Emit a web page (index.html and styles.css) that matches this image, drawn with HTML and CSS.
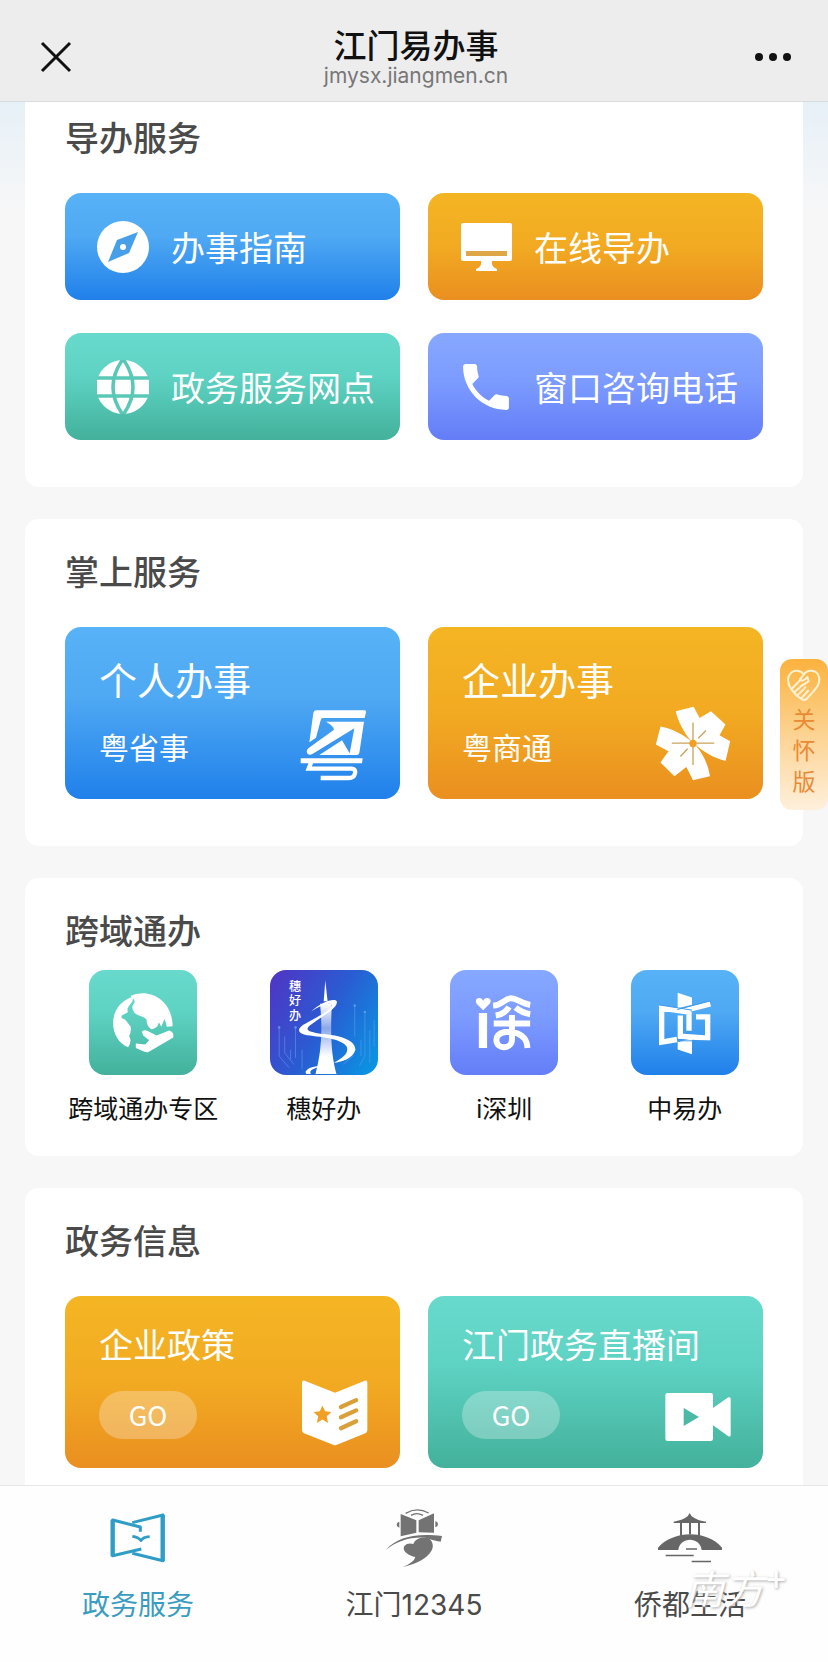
FILE: index.html
```html
<!DOCTYPE html>
<html lang="zh-CN">
<head>
<meta charset="utf-8">
<meta name="viewport" content="width=device-width, initial-scale=1">
<title>江门易办事</title>
<link rel="stylesheet" href="styles.css">
</head>
<body>
<header class="topbar">
  <button class="topbar-btn" type="button" aria-label="关闭">
    <svg width="32" height="32" viewBox="0 0 32 32"><path d="M2 2L30 30M30 2L2 30" stroke="#111" stroke-width="3" fill="none"/></svg>
  </button>
  <div class="topbar-text">
    <h1 class="topbar-title">江门易办事</h1>
    <span class="topbar-url">jmysx.jiangmen.cn</span>
  </div>
  <button class="topbar-btn" type="button" aria-label="更多">
    <svg width="38" height="10" viewBox="0 0 38 10" fill="#111"><circle cx="5" cy="5" r="4"/><circle cx="19" cy="5" r="4"/><circle cx="33" cy="5" r="4"/></svg>
  </button>
</header>

<main class="page">
  <section class="card">
    <h2 class="card-title">导办服务</h2>
    <div class="tiles">
      <a class="tile blue" href="#guide">
        <svg class="tile-icon" viewBox="-26 -26 52 52"><circle r="26" fill="#fff"/><path d="M15-15L6 6L-15 15L-6-7Z" fill="#479fea"/><circle r="3" fill="#fff"/></svg>
        <span>办事指南</span>
      </a>
      <a class="tile orange" href="#online">
        <svg class="tile-icon" viewBox="0 0 52 52"><rect x="1" y="2" width="51" height="38" rx="2" fill="#fff"/><path d="M6 30H47V35H6Z" fill="#dfa645"/><path d="M21 40H32Q31 46 37 48V50H16V48Q22 46 21 40Z" fill="#fff"/></svg>
        <span>在线导办</span>
      </a>
      <a class="tile green" href="#places">
        <svg class="tile-icon" viewBox="-26 -27 52 54"><circle r="27" fill="#fff"/><path d="M-27-9H27M-27 9H27M0-28Q-20 0 0 28Q20 0 0-28" fill="none" stroke="#5ac8b6" stroke-width="3.5"/></svg>
        <span>政务服务网点</span>
      </a>
      <a class="tile violet" href="#phone">
        <svg class="tile-icon" viewBox="1.8 1.8 20.4 20.4"><path fill="#fff" d="M6.62 10.79c1.44 2.83 3.76 5.14 6.59 6.59l2.2-2.2c.27-.27.67-.36 1.02-.24 1.12.37 2.33.57 3.57.57.55 0 1 .45 1 1V20c0 .55-.45 1-1 1-9.39 0-17-7.61-17-17 0-.55.45-1 1-1h3.5c.55 0 1 .45 1 1 0 1.25.2 2.45.57 3.57.11.35.03.74-.25 1.02l-2.2 2.2z"/></svg>
        <span>窗口咨询电话</span>
      </a>
    </div>
  </section>

  <section class="card">
    <h2 class="card-title">掌上服务</h2>
    <div class="tiles">
      <a class="panel blue" href="#personal">
        <span class="panel-name large">个人办事</span>
        <span class="panel-sub">粤省事</span>
        <svg class="panel-icon" width="68" height="72" viewBox="60 190 204 216" fill="#fff">
          <path d="M108 194H254Q259 194 258 200L254 217H128Q124 217 122 224L108 276L88 290L100 202Q101 194 108 194Z"/>
          <path d="M138 228H252L238 322Q237 328 230 328H118L186 284L209 323L223 248L96 326Q82 330 80 318Q80 312 86 307L162 252Q160 240 138 228Z"/>
          <path d="M62 338H248L246 353H62Z"/>
          <path d="M94 348L86 369H214Q228 369 225 383Q222 397 206 397H122" fill="none" stroke="#fff" stroke-width="13"/>
        </svg>
      </a>
      <a class="panel orange" href="#business">
        <span class="panel-name large">企业办事</span>
        <span class="panel-sub">粤商通</span>
        <svg class="panel-icon" width="76" height="75" viewBox="108 190 228 226">
          <path fill="#fff" d="M170 206L224 192L242 226L276 206L320 246L302 278L334 296L320 356C280 345 250 325 228 306C250 330 268 365 273 402L222 414L202 374L166 402L124 360L148 326L110 306L124 252C160 258 195 278 218 298C195 270 178 240 170 206Z"/>
          <path d="M222 240V368M158 302H286M238 287L261 264M184 342L206 319" stroke="#c9a45c" stroke-width="4"/>
          <circle cx="222" cy="303" r="11" fill="#f0a023"/>
        </svg>
      </a>
    </div>
  </section>

  <section class="card compact">
    <h2 class="card-title">跨域通办</h2>
    <div class="apps">
      <a class="app" href="#region">
        <svg class="app-icon green" viewBox="90 60 323 314" fill="#fff">
          <path d="M222 140L220 154C208 170 203 172 206 186L188 196Q184 206 198 208L214 228Q218 242 210 258Q220 272 207 291C178 280 162 250 162 218C162 184 184 150 222 140Z"/>
          <path d="M214 138C270 112 340 150 340 228L323 230L316 206L306 230L298 214V196L302 184L298 198C304 222 292 236 276 237Q262 228 262 208C252 196 238 200 226 188Q214 172 224 160Q232 152 214 138Z"/>
          <path d="M248 244Q256 238 264 242L292 256L330 241Q345 246 342 262L268 305Q262 308 254 304L230 293V280L258 283L270 270L252 256Z"/>
        </svg>
        <span>跨域通办专区</span>
      </a>
      <a class="app" href="#sui">
        <svg class="app-icon indigo" viewBox="627 60 330 314">
          <defs><linearGradient id="tower" x1="0" y1="0" x2="0" y2="1"><stop offset="0" stop-color="#fff"/><stop offset=".35" stop-color="#8ba7ea"/><stop offset=".75" stop-color="#fff"/></linearGradient></defs>
          <g fill="none" stroke="#5b9cf0" stroke-width="3" opacity=".6"><path d="M655 235V320L685 355M672 260V310L700 345M705 235V325M725 300V360M886 165V260M917 185V320L900 350M945 210V290M932 240V340M850 345L880 320V290M690 300V330M905 270V320"/></g>
          <g fill="#6ba8f5" opacity=".7"><circle cx="655" cy="232" r="4"/><circle cx="705" cy="232" r="4"/><circle cx="886" cy="165" r="4"/><circle cx="917" cy="185" r="4"/></g>
          <path fill="#fff" d="M796 88L803 152H791Z"/>
          <path fill="url(#tower)" d="M780 160H816C812 240 812 310 830 374H766C784 310 788 240 780 160Z"/>
          <path fill="#fff" d="M752 184C780 156 824 140 831 152C836 172 790 195 754 222C728 240 745 246 786 252C850 256 888 274 888 300C880 328 845 338 822 340C850 326 868 310 862 292C850 268 790 262 740 256C704 248 712 232 740 218C780 196 822 174 816 162C806 154 778 166 752 184Z"/>
          <path fill="#fff" d="M776 350C745 352 730 366 738 374H752C746 366 756 358 776 354Z"/>
          <g fill="#fff" font-size="37" font-weight="500"><text x="685" y="120">穗</text><text x="685" y="165">好</text><text x="685" y="210">办</text></g>
        </svg>
        <span>穗好办</span>
      </a>
      <a class="app" href="#shenzhen">
        <svg class="app-icon violet" viewBox="60 60 326 314">
          <path fill="#fff" d="M147 188H172V294H147ZM160 180L141 161C130 145 152 136 160 151C168 136 192 145 179 161Z"/>
          <path d="M190 166C220 164 224 144 244 144C264 144 268 158 302 164M198 196C222 192 232 180 238 170M258 172Q276 188 302 192M192 220H302M247 194V268C247 298 200 300 200 270C200 244 240 240 264 250C286 260 292 272 294 294" fill="none" stroke="#fff" stroke-width="18"/>
        </svg>
        <span>i深圳</span>
      </a>
      <a class="app" href="#zhongshan">
        <svg class="app-icon blue" viewBox="602 60 324 314">
          <path fill="#fff" d="M742 128L785 142V164L742 174ZM742 276L785 264V312L742 298Z"/>
          <path d="M740 268L694 276V174L776 186V242M750 196V258L832 264V200H797M752 184L840 161" fill="none" stroke="#fff" stroke-width="16"/>
          <path d="M686 164L785 180M742 272L842 272M741 178L841 152" fill="none" stroke="#3e98e8" stroke-width="3"/>
        </svg>
        <span>中易办</span>
      </a>
    </div>
  </section>

  <section class="card">
    <h2 class="card-title">政务信息</h2>
    <div class="tiles">
      <a class="panel orange" href="#policy">
        <span class="panel-name">企业政策</span>
        <span class="go">GO</span>
        <svg class="panel-icon" width="66" height="66" viewBox="780 300 200 200">
          <path fill="#fff" d="M788 302L880 339L970 302Q978 300 978 309V452Q978 458 972 461L884 497Q880 499 876 497L786 461Q780 458 780 452V309Q780 300 788 302Z"/>
          <path fill="#efa025" d="M842 377L850 395L869 397L855 410L859 430L842 420L825 430L829 410L815 397L834 395Z"/>
          <path d="M898 382L944 361M898 413L944 392M898 446L944 425" stroke="#d9a03a" stroke-width="13" stroke-linecap="round"/>
        </svg>
      </a>
      <a class="panel green" href="#live">
        <span class="panel-name">江门政务直播间</span>
        <span class="go">GO</span>
        <svg class="panel-icon" width="66" height="66" viewBox="722 300 198 198">
          <rect x="723" y="339" width="143" height="144" rx="7" fill="#fff"/>
          <path fill="#fff" d="M866 384L912 352Q919 350 919 356V464Q919 472 912 469L866 436Z"/>
          <path fill="#4bb9a5" d="M778 384L824 411L778 438Z"/>
        </svg>
      </a>
    </div>
  </section>
</main>

<a class="care" href="#care">
  <svg width="34" height="32" viewBox="502 88 100 94" fill="none" stroke="#fff1d2" stroke-width="6" stroke-linecap="round" stroke-linejoin="round"><path d="M530 166L514 146C494 116 512 92 532 93Q545 94 552 104C562 88 588 90 595 108C602 128 590 142 578 156L560 176Q552 182 545 176L530 166M552 104L540 118Q546 128 562 112L566 124L548 136M516 146L540 122M524 156L548 134M534 164L556 142M546 172L564 152"/></svg>
  <span>关</span><span>怀</span><span>版</span>
</a>

<nav class="tabbar">
  <a class="tab active" href="#service">
    <svg class="tab-icon" width="56" height="50" viewBox="155 98 168 150" fill="none" stroke="#2f9dc6" stroke-linejoin="round">
      <path d="M246 154V140L163 119V226L249 206" stroke-width="9"/><path d="M163 118V228M313 104V242" stroke-width="13"/><path d="M222 127L314 104V241L222 219" stroke-width="9"/><path d="M222 168Q240 170 248 181Q254 170 274 169" stroke-width="8"/>
    </svg>
    <span>政务服务</span>
  </a>
  <a class="tab" href="#12345">
    <svg class="tab-icon" width="56" height="58" viewBox="978 85 168 174" fill="#737373">
      <path d="M1022 100L1069 119V156L1022 167ZM1076 119L1122 98V156L1076 155ZM1018 123V141Q1010 138 1010 132Q1010 125 1018 123ZM1126 121Q1134 124 1134 131Q1134 138 1126 140Z"/>
      <path d="M1037 98Q1070 78 1106 97M1053 104Q1070 94 1089 104" fill="none" stroke="#737373" stroke-width="4"/>
      <path d="M978 207C1010 172 1060 156 1146 166L1142 183C1120 178 1108 176 1096 171C1050 168 1010 182 978 207Z"/>
      <path d="M1028 259Q1062 246 1066 229C1048 226 1024 212 1033 196Q1042 186 1060 190C1066 172 1096 164 1112 178C1134 206 1098 244 1028 259Z"/>
    </svg>
    <span>江门12345</span>
  </a>
  <a class="tab" href="#life">
    <svg class="tab-icon" width="64" height="50" viewBox="174 98 192 150" fill="#666">
      <path d="M269 98L275 108Q294 122 318 124V128H221V124Q246 121 263 108ZM240 128H246V166H240ZM267 128H273V162H267ZM294 128H300V166H294Z"/>
      <path d="M174 209V202C220 148 322 148 366 202V209H305C300 168 240 168 235 209Z"/>
      <path d="M258 204H291V208H258ZM197 223H281V228H197ZM275 241H333V246H275Z"/>
    </svg>
    <span>侨都生活</span>
  </a>
  <div class="watermark">南方<sup>+</sup></div>
</nav>
</body>
</html>
```
FILE: styles.css
```css
* { box-sizing: border-box; }

body {
  margin: 0;
  height: 100vh;
  overflow: hidden;
  background: #f7f7f8;
  color: #4a4a4a;
  font-family: Inter, "Noto Sans CJK SC", sans-serif;
}

a { color: inherit; text-decoration: none; }
svg { display: block; flex: none; }
h1, h2 { margin: 0; }

/* fixed bars */
.topbar {
  position: fixed;
  inset: 0 0 auto;
  z-index: 2;
  height: 102px;
  padding: 12px 36px 0 40px;
  display: flex;
  align-items: center;
  justify-content: space-between;
  background: #ededee;
  border-bottom: 1px solid #d9dcde;
}
.topbar-btn { padding: 0; border: 0; background: none; width: 38px; display: flex; }
.topbar-text { text-align: center; }
.topbar-title { font-size: 33px; line-height: 38px; font-weight: 500; color: #111; }
.topbar-url { display: block; font-size: 21px; line-height: 22px; color: #777; }

.tabbar {
  position: fixed;
  inset: auto 0 0;
  z-index: 2;
  height: 177px;
  padding-top: 23px;
  display: grid;
  grid-template-columns: repeat(3, 1fr);
  background: #fefefe;
  border-top: 1px solid #e6e6e6;
}
.tab {
  display: flex;
  flex-direction: column;
  align-items: center;
  gap: 20px;
  font-size: 28px;
  line-height: 36px;
}
.tab-icon { height: 58px; }
.tab.active { color: #3a9cc0; }

.watermark {
  position: absolute;
  right: 40px;
  bottom: 32px;
  font-size: 40px;
  line-height: 80px;
  font-style: italic;
  font-weight: 400;
  color: #fff;
  text-shadow: 1px 1px 3px #aaa;
}
.watermark sup { font-size: 36px; line-height: 0; font-style: normal; }

/* scrolling content */
.page {
  height: 100vh;
  overflow-y: auto;
  scrollbar-width: none;
  padding: 85px 25px 200px;
  display: flex;
  flex-direction: column;
  gap: 32px;
  background: linear-gradient(#e6f0f7 100px, #f7f7f8 210px);
}
.card {
  flex: none;
  padding: 32px 40px 47px;
  border-radius: 14px;
  background: #fff;
}
.card-title {
  margin-bottom: 32px;
  font-size: 34px;
  line-height: 44px;
  font-weight: 500;
}
.tiles { display: grid; grid-template-columns: 1fr 1fr; gap: 33px 28px; }

.blue { background: linear-gradient(#58b2f7, #4fa9f3 40%, #2080ea); }
.orange { background: linear-gradient(#f4b523, #f2aa22 50%, #ea8f20); }
.green { background: linear-gradient(#68dacd, #5ed2c3 40%, #43b19b); }
.violet { background: linear-gradient(#87a8ff, #7c9bff 45%, #647df7); }
.indigo { background: linear-gradient(120deg, #5233c4, #2a5cd2 50%, #069be4); }

.tile {
  height: 107px;
  padding: 0 16px 0 32px;
  border-radius: 16px;
  display: flex;
  align-items: center;
  gap: 22px;
  color: #fff;
  font-size: 34px;
  white-space: nowrap;
}
.tile-icon { width: 52px; height: 54px; }

.panel {
  height: 172px;
  padding: 28px 32px 22px 34px;
  border-radius: 16px;
  display: grid;
  grid-template-columns: 1fr auto;
  grid-template-rows: 44px 1fr;
  row-gap: 16px;
  color: #fff;
}
.panel-name {
  grid-area: 1 / 1 / 2 / 3;
  font-size: 34px;
  line-height: 44px;
}
.panel-name.large { font-size: 38px; line-height: 52px; }
.panel-sub { grid-area: 2 / 1; font-size: 30px; line-height: 66px; }
.panel-icon { grid-area: 1 / 2 / 3 / 3; align-self: end; }
.go {
  grid-area: 2 / 1;
  align-self: center;
  width: 98px;
  border-radius: 24px;
  background: rgba(255, 255, 255, .28);
  font-family: "Noto Sans CJK SC", sans-serif;
  font-size: 27px;
  line-height: 48px;
  text-align: center;
}

.compact { padding-bottom: 27px; }
.compact .card-title { margin-bottom: 16px; }
.apps { display: grid; grid-template-columns: repeat(4, 1fr); margin: 0 -12px; }
.app {
  display: flex;
  flex-direction: column;
  align-items: center;
  gap: 14px;
  font-size: 25px;
  line-height: 40px;
  color: #111;
  white-space: nowrap;
}
.app-icon { width: 108px; height: 105px; border-radius: 16px; }

.care {
  position: fixed;
  top: 659px;
  right: 0;
  z-index: 1;
  width: 48px;
  padding: 10px 0 12px;
  border-radius: 12px;
  display: flex;
  flex-direction: column;
  align-items: center;
  background: linear-gradient(#fbb23d, #fcd08a 45%, #fef0dc);
  color: #ea8a35;
  font-size: 23px;
  line-height: 31px;
}
.care svg { margin-bottom: 4px; }
```
